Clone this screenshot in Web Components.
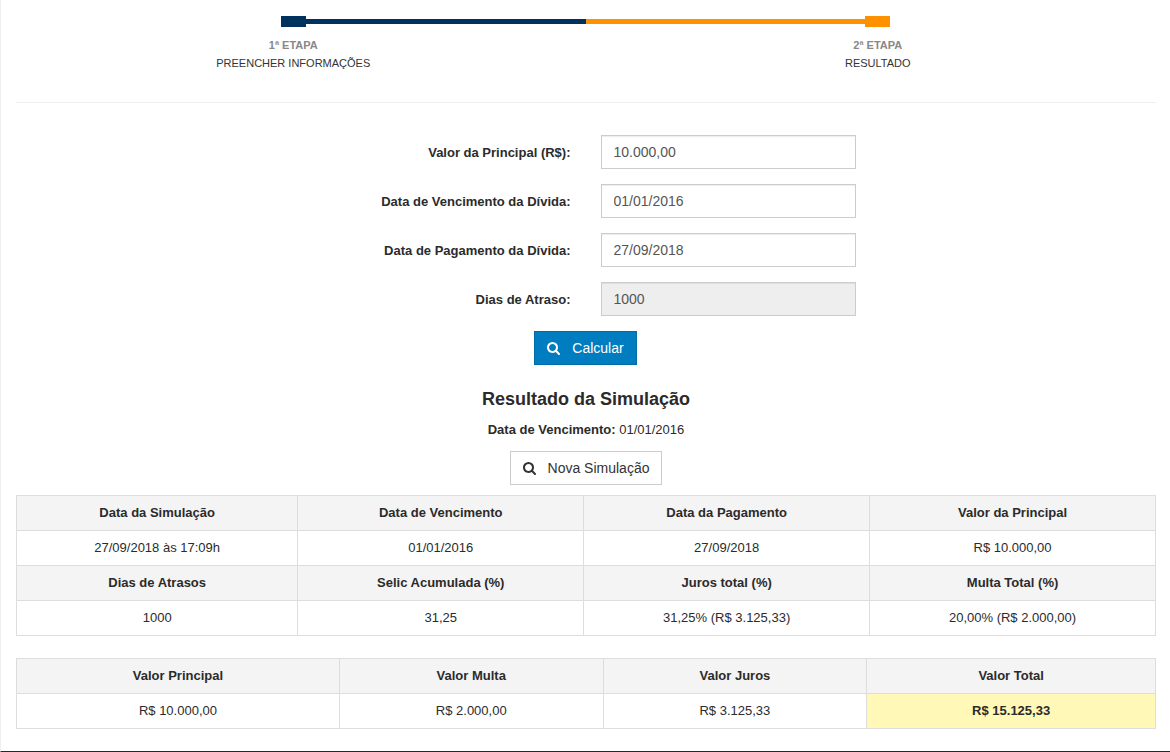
<!DOCTYPE html>
<html lang="pt-BR">
<head>
<meta charset="utf-8">
<meta name="viewport" content="width=device-width, initial-scale=1">
<title>Simulação de Dívida</title>
<style>
  html { background: #fff; }
  body {
    margin: 0;
    font: 13px/18px "Liberation Sans", Arial, sans-serif;
    color: #2b2b2b;
  }
</style>
</head>
<body>
<simulation-page>
  <step-progress slot="steps">
    <step-item state="done" heading="1ª ETAPA">PREENCHER INFORMAÇÕES</step-item>
    <step-item state="current" heading="2ª ETAPA">RESULTADO</step-item>
  </step-progress>

  <form-field slot="fields" label="Valor da Principal (R$):" value="10.000,00"></form-field>
  <form-field slot="fields" label="Data de Vencimento da Dívida:" value="01/01/2016"></form-field>
  <form-field slot="fields" label="Data de Pagamento da Dívida:" value="27/09/2018"></form-field>
  <form-field slot="fields" label="Dias de Atraso:" value="1000" disabled></form-field>
  <search-button slot="submit" primary>Calcular</search-button>

  <result-heading slot="result" due="01/01/2016">Resultado da Simulação</result-heading>
  <search-button slot="restart">Nova Simulação</search-button>

  <data-table slot="tables" id="details"></data-table>
  <data-table slot="tables" id="totals"></data-table>
</simulation-page>

<script>
  class BaseElement extends HTMLElement {
    render(html) {
      if (!this.shadowRoot) this.attachShadow({ mode: "open" });
      this.shadowRoot.innerHTML = html;
    }
  }

  customElements.define("simulation-page", class extends BaseElement {
    connectedCallback() {
      this.render(`
        <style>
          :host { display: block; border-left: 1px solid #eee; border-bottom: 1px solid #00325f; }
          main { padding: 16px 14px 22px 15px; }
          .wide { margin: 0 -14px 0 -15px; }
          hr { margin: 30px 0 32px; border: 0; border-top: 1px solid #eee; }
          form { display: grid; gap: 15px; }
          .center { display: flex; justify-content: center; }
          .result { padding: 22px 0 10px; display: grid; gap: 12px; }
          .tables { display: grid; gap: 22px; }
        </style>
        <main>
          <div class="wide"><slot name="steps"></slot></div>
          <hr>
          <form class="wide">
            <slot name="fields"></slot>
            <div class="center"><slot name="submit"></slot></div>
          </form>
          <section class="result">
            <slot name="result"></slot>
            <div class="center"><slot name="restart"></slot></div>
          </section>
          <section class="tables"><slot name="tables"></slot></section>
        </main>`);
    }
  });

  customElements.define("step-progress", class extends BaseElement {
    connectedCallback() {
      this.render(`
        <style>:host { display: grid; grid-template-columns: 1fr 1fr; }</style>
        <slot></slot>`);
    }
  });

  customElements.define("step-item", class extends BaseElement {
    connectedCallback() {
      this.render(`
        <style>
          :host { display: block; text-align: center; font-size: 11px; color: #333; --tone: #00325f; }
          :host([state="current"]) { --tone: #ff9000; }
          .track { display: grid; grid-template-columns: 1fr 25px 1fr; align-items: center; height: 11px; margin-bottom: 9px; }
          .marker { grid-column: 2; grid-row: 1; height: 11px; background: var(--tone); }
          .line { grid-column: 3; grid-row: 1; height: 5px; background: var(--tone); }
          :host([state="current"]) .line { grid-column: 1; }
          strong { display: block; color: #888; }
        </style>
        <div class="track"><span class="marker"></span><span class="line"></span></div>
        <strong>${this.getAttribute("heading")}</strong>
        <slot></slot>`);
    }
  });

  customElements.define("form-field", class extends BaseElement {
    connectedCallback() {
      this.render(`
        <style>
          :host { display: grid; grid-template-columns: 1fr 1fr; align-items: start; }
          label { padding: 9px 15px 0; text-align: right; font-weight: bold; }
          input {
            box-sizing: border-box; width: 255px; height: 34px; margin: 0 15px; padding: 6px 12px;
            border: 1px solid #ccc; border-radius: 0; background: #fff; color: #555;
            font: 14px/20px "Liberation Sans", Arial, sans-serif;
            box-shadow: inset 0 1px 1px rgba(0, 0, 0, .075);
          }
          input:disabled { background: #eee; }
        </style>
        <label for="field">${this.getAttribute("label")}</label>
        <input id="field" type="text" value="${this.getAttribute("value")}" ${this.hasAttribute("disabled") ? "disabled" : ""}>`);
    }
  });

  customElements.define("search-button", class extends BaseElement {
    connectedCallback() {
      this.render(`
        <style>
          :host { display: block; }
          button {
            display: flex; align-items: center; gap: 12px; height: 34px; padding: 0 12px;
            border: 1px solid #ccc; border-radius: 0; background: #fff; color: #333; cursor: pointer;
            font: 14px/20px "Liberation Sans", Arial, sans-serif;
          }
          :host([primary]) button { background: #007cc0; border-color: #006da7; color: #fff; }
          svg { width: 13px; height: 14px; fill: currentColor; }
        </style>
        <button type="button">
          <svg viewBox="0 0 1664 1792" aria-hidden="true"><path d="M1152 832q0-185-131.5-316.5T704 384 387.500 515.500 256 832t131.500 316.500T704 1280t316.500-131.500T1152 832zm512 832q0 52-38 90t-90 38q-54 0-90-38l-343-342q-179 124-399 124-143 0-273.500-55.500t-225-150-150-225T0 832t55.500-273.500 150-225 225-150T704 128t273.500 55.500 225 150 150 225T1408 832q0 220-124 399l343 343q37 37 37 90z"/></svg>
          <span><slot></slot></span>
        </button>`);
    }
  });

  customElements.define("result-heading", class extends BaseElement {
    connectedCallback() {
      this.render(`
        <style>
          :host { display: block; text-align: center; }
          h2 { margin: 0 0 10px; font-size: 18px; line-height: 24px; }
          p { margin: 0; }
        </style>
        <h2><slot></slot></h2>
        <p><strong>Data de Vencimento:</strong> ${this.getAttribute("due")}</p>`);
    }
  });

  customElements.define("data-table", class extends BaseElement {
    set data({ widths, rows }) {
      const row = ({ head, cells, total }) => "<tr>" + cells.map((text, i) => {
        if (head) return `<th scope="col">${text}</th>`;
        return `<td${total === i ? ' class="total"' : ""}>${text}</td>`;
      }).join("") + "</tr>";
      this.render(`
        <style>
          :host { display: block; }
          table { width: 100%; border-collapse: collapse; table-layout: fixed; }
          th, td { height: 18px; padding: 8px; border: 1px solid #ddd; text-align: center; }
          th { background: #f4f4f4; }
          .total { background: #fff8b7; font-weight: bold; }
        </style>
        <table>
          <colgroup>${widths.map(w => `<col style="width:${w}%">`).join("")}</colgroup>
          <tbody>${rows.map(row).join("")}</tbody>
        </table>`);
    }
  });

  document.getElementById("details").data = {
    widths: [24.7, 25.1, 25.1, 25.1],
    rows: [
      { head: true, cells: ["Data da Simulação", "Data de Vencimento", "Data da Pagamento", "Valor da Principal"] },
      { cells: ["27/09/2018 às 17:09h", "01/01/2016", "27/09/2018", "R$ 10.000,00"] },
      { head: true, cells: ["Dias de Atrasos", "Selic Acumulada (%)", "Juros total (%)", "Multa Total (%)"] },
      { cells: ["1000", "31,25", "31,25% (R$ 3.125,33)", "20,00% (R$ 2.000,00)"] }
    ]
  };
  document.getElementById("totals").data = {
    widths: [28.35, 23.15, 23.15, 25.35],
    rows: [
      { head: true, cells: ["Valor Principal", "Valor Multa", "Valor Juros", "Valor Total"] },
      { cells: ["R$ 10.000,00", "R$ 2.000,00", "R$ 3.125,33", "R$ 15.125,33"], total: 3 }
    ]
  };
</script>
</body>
</html>
